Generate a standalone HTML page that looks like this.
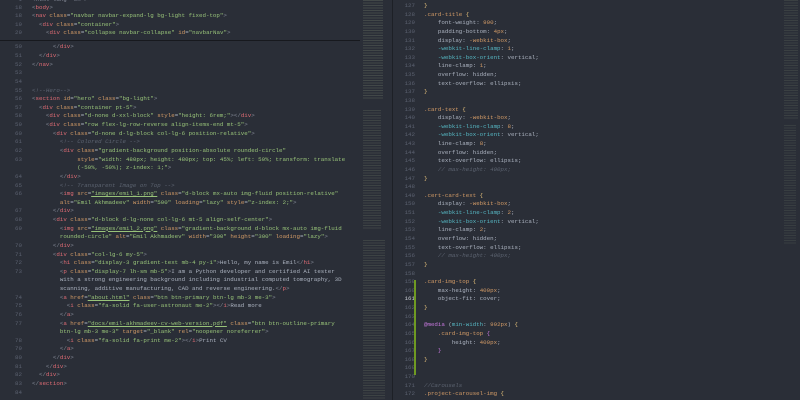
<!DOCTYPE html>
<html><head><meta charset="utf-8"><style>
html,body{margin:0;padding:0;width:800px;height:400px;overflow:hidden;background:#282c34;}
body{font-family:"Liberation Mono",monospace;font-size:5.8px;color:#abb2bf;position:relative;}
.pane{position:absolute;top:0;height:400px;overflow:hidden;}
.r{position:absolute;left:0;height:8.63px;line-height:8.63px;white-space:pre;}
.n{position:absolute;width:22px;text-align:right;color:#5b6170;}
.t{color:#e06c75}.a{color:#d19a66}.s{color:#98c379}.c{color:#5c6370;font-style:italic}.g{color:#7f8491}
.o{color:#d19a66}.y{color:#e5c07b}.k{color:#56b6c2}.m{color:#c678dd}.u{text-decoration:underline}
.mini{position:absolute;background:repeating-linear-gradient(180deg,rgba(150,165,130,.22) 0 1px,transparent 1px 2.5px);}
</style></head><body>
<div class="pane" style="left:0;width:392px;background:#2a2e37;">
<div style="position:absolute;left:0;top:0;width:392px;height:400px;">
<div id="L" style="position:absolute;left:0;top:34.8px;width:360px;"></div>
</div>
<div style="position:absolute;left:0;top:0;width:360px;height:40px;background:#2a2e37;border-bottom:1.5px solid #17191e;">
<div class="r" style="top:-4.3px;"><span class="n" style="left:0">1</span><span style="position:absolute;left:32px" class="g">&lt;html lang="en"&gt;</span></div>
<div class="r" style="top:4.3px;"><span class="n">18</span><span style="position:absolute;left:32px"><span class="g">&lt;</span><span class="t">body</span><span class="g">&gt;</span></span></div>
<div class="r" style="top:12.4px;"><span class="n">18</span><span style="position:absolute;left:32px"><span class="g">&lt;</span><span class="t">nav</span> <span class="a">class</span>=<span class="s">"navbar navbar-expand-lg bg-light fixed-top"</span><span class="g">&gt;</span></span></div>
<div class="r" style="top:20.9px;"><span class="n">19</span><span style="position:absolute;left:39px"><span class="g">&lt;</span><span class="t">div</span> <span class="a">class</span>=<span class="s">"container"</span><span class="g">&gt;</span></span></div>
<div class="r" style="top:29.4px;"><span class="n">29</span><span style="position:absolute;left:46px"><span class="g">&lt;</span><span class="t">div</span> <span class="a">class</span>=<span class="s">"collapse navbar-collapse"</span> <span class="a">id</span>=<span class="s">"navbarNav"</span><span class="g">&gt;</span></span></div>
</div>
<div class="mini" style="left:363px;top:0;width:20px;height:100px;"></div>
<div class="mini" style="left:363px;top:110px;width:18px;height:120px;opacity:.8"></div>
<div class="mini" style="left:363px;top:240px;width:22px;height:160px;opacity:.8"></div>
</div>
<div style="position:absolute;left:392px;top:0;width:1px;height:400px;background:#1d2026"></div>
<div class="pane" style="left:393px;width:407px;background:#2a2e37;">
<div id="R" style="position:absolute;left:0;top:2px;width:390px;"></div>
<div style="position:absolute;left:21px;top:280px;width:1.5px;height:95px;background:#6f9a22"></div>
<div class="mini" style="left:391px;top:0;width:14px;height:120px;opacity:.7"></div>
<div class="mini" style="left:391px;top:125px;width:12px;height:120px;opacity:.6"></div>
</div>
<script>
function rows(id,lines,x0,numLeft){
 var h='';var c=document.getElementById(id);
 lines.forEach(function(l,i){
  var top=(i*8.63).toFixed(2);
  h+='<div class="r" style="top:'+top+'px;width:100%;"><span class="n" style="left:'+numLeft+'px;'+(l[2]?'color:#c8ccd4;':'')+'">'+l[0]+'</span><span style="position:absolute;left:'+x0+'px">'+l[1]+'</span></div>';
 });
 c.innerHTML=h;
}
function T(n){return '<span class="g">&lt;</span><span class="t">'+n+'</span>'}
function E(n){return '<span class="g">&lt;/</span><span class="t">'+n+'</span><span class="g">&gt;</span>'}
function A(n,v,u){return ' <span class="a">'+n+'</span>=<span class="s'+(u?' u':'')+'">"'+v+'"</span>'}
var G='<span class="g">&gt;</span>';
function S(k){return ' '.repeat(k)}
var L=[
['49',S(6)+E('ul')],
['50',S(6)+E('div')],
['51',S(2)+E('div')],
['52',E('nav')],
['53',''],['54',''],
['55','<span class="c">&lt;!--Hero--&gt;</span>'],
['56',T('section')+A('id','hero')+A('class','bg-light')+G],
['57',S(2)+T('div')+A('class','container pt-5')+G],
['58',S(4)+T('div')+A('class','d-none d-xxl-block')+A('style','height: 6rem;')+G+E('div')],
['59',S(4)+T('div')+A('class','row flex-lg-row-reverse align-items-end mt-5')+G],
['60',S(6)+T('div')+A('class','d-none d-lg-block col-lg-6 position-relative')+G],
['61',S(8)+'<span class="c">&lt;!-- Colored Circle --&gt;</span>'],
['62',S(8)+T('div')+A('class','gradient-background position-absolute rounded-circle')],
['63',S(13)+'<span class="a">style</span>=<span class="s">"width: 480px; height: 480px; top: 45%; left: 50%; transform: translate</span>'],
['',S(13)+'<span class="s">(-50%, -50%); z-index: 1;"</span>'+G],
['64',S(8)+E('div')],
['65',S(8)+'<span class="c">&lt;!-- Transparent Image on Top --&gt;</span>'],
['66',S(8)+T('img')+A('src','images/emil_1.png',1)+A('class','d-block mx-auto img-fluid position-relative')],
['',S(8)+'<span class="a">alt</span>=<span class="s">"Emil Akhmadeev"</span>'+A('width','500')+A('loading','lazy')+A('style','z-index: 2;')+G],
['67',S(6)+E('div')],
['68',S(6)+T('div')+A('class','d-block d-lg-none col-lg-6 mt-5 align-self-center')+G],
['69',S(8)+T('img')+A('src','images/emil_2.png',1)+' <span class="a">class</span>=<span class="s">"gradient-background d-block mx-auto img-fluid</span>'],
['',S(8)+'<span class="s">rounded-circle"</span>'+A('alt','Emil Akhmadeev')+A('width','300')+A('height','300')+A('loading','lazy')+G],
['70',S(6)+E('div')],
['71',S(6)+T('div')+A('class','col-lg-6 my-5')+G],
['72',S(8)+T('h1')+A('class','display-3 gradient-text mb-4 py-1')+G+'Hello, my name is Emil'+E('h1')],
['73',S(8)+T('p')+A('class','display-7 lh-sm mb-5')+G+'I am a Python developer and certified AI tester'],
['',S(8)+'with a strong engineering background including industrial computed tomography, 3D'],
['',S(8)+'scanning, additive manufacturing, CAD and reverse engineering.'+E('p')],
['74',S(8)+T('a')+A('href','about.html',1)+A('class','btn btn-primary btn-lg mb-3 me-3')+G],
['75',S(10)+T('i')+A('class','fa-solid fa-user-astronaut me-2')+G+E('i')+'Read more'],
['76',S(8)+E('a')],
['77',S(8)+T('a')+A('href','docs/emil-akhmadeev-cv-web-version.pdf',1)+' <span class="a">class</span>=<span class="s">"btn btn-outline-primary</span>'],
['',S(8)+'<span class="s">btn-lg mb-3 me-3"</span>'+A('target','_blank')+A('rel','noopener noreferrer')+G],
['78',S(10)+T('i')+A('class','fa-solid fa-print me-2')+G+E('i')+'Print CV'],
['79',S(8)+E('a')],
['80',S(6)+E('div')],
['81',S(4)+E('div')],
['82',S(2)+E('div')],
['83',E('section')],
['84','']
];
rows('L',L,32,0);
var B='<span class="y">{</span>',C='<span class="y">}</span>';
function P(p,v,k){return S(4)+'<span class="'+(k?'k':'')+'">'+p+'</span>: '+v+';'}
function O(v){return '<span class="o">'+v+'</span>'}
var R=[
['127',C],
['128','<span class="o">.card-title</span> '+B],
['129',P('font-weight',O('900'))],
['130',P('padding-bottom',O('4px'))],
['131',P('display',O('-webkit-box'))],
['132',P('-webkit-line-clamp',O('1'),1)],
['133',P('-webkit-box-orient','vertical',1)],
['134',P('line-clamp',O('1'))],
['135',P('overflow','hidden')],
['136',P('text-overflow','ellipsis')],
['137',C],['138',''],
['139','<span class="o">.card-text</span> '+B],
['140',P('display',O('-webkit-box'))],
['141',P('-webkit-line-clamp',O('8'),1)],
['142',P('-webkit-box-orient','vertical',1)],
['143',P('line-clamp',O('8'))],
['144',P('overflow','hidden')],
['145',P('text-overflow','ellipsis')],
['146',S(4)+'<span class="c">// max-height: 400px;</span>'],
['147',C],['148',''],
['149','<span class="o">.cert-card-text</span> '+B],
['150',P('display',O('-webkit-box'))],
['151',P('-webkit-line-clamp',O('2'),1)],
['152',P('-webkit-box-orient','vertical',1)],
['153',P('line-clamp',O('2'))],
['154',P('overflow','hidden')],
['155',P('text-overflow','ellipsis')],
['156',S(4)+'<span class="c">// max-height: 400px;</span>'],
['157',C],['158',''],
['159','<span class="o">.card-img-top</span> '+B],
['160',P('max-height',O('400px'))],
['161',P('object-fit','cover'),1],
['162',C],['163',''],
['164','<span class="m">@media</span> (<span class="k">min-width</span>: '+O('992px')+') '+B],
['165',S(4)+'<span class="o">.card-img-top</span> <span class="m">{</span>'],
['166',S(8)+'height: '+O('400px')+';'],
['167',S(4)+'<span class="m">}</span>'],
['168',C],['169',''],['170',''],
['171','<span class="c">//Carousels</span>'],
['172','<span class="o">.project-carousel-img</span> '+B]
];
rows('R',R,31,0);
</script>
</body></html>
